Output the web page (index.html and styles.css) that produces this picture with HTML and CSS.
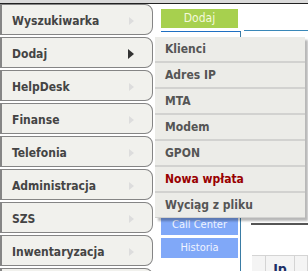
FILE: index.html
```html
<!DOCTYPE html>
<html lang="pl">
<head>
    <meta charset="UTF-8">
    <title>Menu</title>
    <link rel="stylesheet" href="styles.css">
</head>
<body>
    <div class="topbar"></div>
    <div class="layout">
        <ul class="nav">
            <li class="nav-item"><span>Wyszukiwarka</span><i class="arrow"></i></li>
            <li class="nav-item active"><span>Dodaj</span><i class="arrow"></i></li>
            <li class="nav-item"><span>HelpDesk</span><i class="arrow"></i></li>
            <li class="nav-item"><span>Finanse</span><i class="arrow"></i></li>
            <li class="nav-item"><span>Telefonia</span><i class="arrow"></i></li>
            <li class="nav-item"><span>Administracja</span><i class="arrow"></i></li>
            <li class="nav-item"><span>SZS</span><i class="arrow"></i></li>
            <li class="nav-item"><span>Inwentaryzacja</span><i class="arrow"></i></li>
            <li class="nav-item nav-last"></li>
        </ul>
        <div class="side">
            <div class="btn-green">Dodaj</div>
            <div class="side-box">
                <div class="btn-blue">Call Center</div>
                <div class="btn-blue">Historia</div>
            </div>
        </div>
        <div class="main">
            <div class="main-head"></div>
            <div class="main-rule"></div>
            <div class="grid">
                <div class="cell cell-first"></div>
                <div class="cell cell-ip">Ip</div>
                <div class="cell"></div>
            </div>
        </div>
    </div>
    <ul class="dropdown">
        <li>Klienci</li>
        <li>Adres IP</li>
        <li>MTA</li>
        <li>Modem</li>
        <li>GPON</li>
        <li class="red">Nowa wpłata</li>
        <li>Wyciąg z pliku</li>
    </ul>
</body>
</html>
```

FILE: styles.css
```css
html, body {
    margin: 0;
    width: 100%;
    height: 100%;
    overflow: hidden;
}
body {
    background: #fff;
    font-family: "DejaVu Sans Condensed", "DejaVu Sans", sans-serif;
}
.topbar {
    height: 3px;
    background: #dadada;
    border-bottom: 1px solid #222;
}
.layout {
    display: flex;
    align-items: flex-start;
}
.nav {
    list-style: none;
    margin: 0;
    padding: 0;
    width: 153px;
    flex: none;
}
.nav-item {
    box-sizing: border-box;
    height: 31px;
    margin-bottom: 2px;
    padding: 2px 18px 0 10px;
    display: flex;
    justify-content: space-between;
    align-items: center;
    background: #f1f1ed;
    border: 1px solid #858585;
    border-left-width: 2px;
    border-radius: 0 8px 8px 0;
    color: #444;
    font-size: 12px;
    font-weight: bold;
}
.nav-last {
    margin-bottom: 0;
}
.arrow {
    display: block;
    width: 0;
    height: 0;
    border-left: 5px solid #ddd;
    border-top: 4px solid transparent;
    border-bottom: 4px solid transparent;
}
.nav-item.active .arrow {
    border-left: 6px solid #333;
    border-top-width: 5px;
    border-bottom-width: 5px;
}
.side {
    width: 80px;
    margin-left: 8px;
    flex: none;
}
.btn-green {
    width: 77px;
    height: 19px;
    margin-top: 5px;
    background: #a7d04e;
    color: #f4f9dc;
    font-size: 12px;
    line-height: 19px;
    text-align: center;
}
.side-box {
    margin-top: 3px;
    height: 56px;
    padding-top: 183px;
    border-top: 1px solid #1f6fc2;
    border-right: 1px solid #3a7ca5;
}
.btn-blue {
    width: 77px;
    height: 20px;
    margin-bottom: 3px;
    background: #80a8f8;
    color: #f0f4ff;
    font-size: 11px;
    line-height: 20px;
    text-align: center;
}
.main {
    flex: 1;
    margin-left: 3px;
}
.main-head {
    margin-top: 26px;
    height: 192px;
    border-top: 1px solid #3a88b8;
}
.main-rule {
    margin-left: 7px;
    border-top: 2px solid #555;
}
.grid {
    display: flex;
    margin: 30px 0 0 8px;
    border-top: 1px solid #d4d4d4;
    background: #f4f4f4;
    height: 17px;
}
.cell {
    flex: 1;
    border-right: 1px solid #d4d4d4;
}
.cell-first {
    flex: none;
    width: 13px;
}
.cell-ip {
    flex: none;
    width: 29px;
    padding-top: 5px;
    text-align: center;
    color: #1c2f66;
    font-size: 14px;
    line-height: 16px;
    font-weight: bold;
    overflow: hidden;
    box-sizing: border-box;
}
.dropdown {
    position: absolute;
    left: 155px;
    top: 37px;
    width: 150px;
    margin: 0;
    padding: 0;
    list-style: none;
    background: #ecece8;
    box-shadow: 3px 3px 2px rgba(0, 0, 0, .28);
}
.dropdown li {
    height: 24px;
    line-height: 25px;
    padding-left: 10px;
    border-bottom: 2px solid #d2d2d0;
    color: #555;
    font-size: 12px;
    font-weight: bold;
}
.dropdown li:last-child {
    border-bottom: 1px solid #d2d2d0;
}
.dropdown li.red {
    color: #990000;
}
```
